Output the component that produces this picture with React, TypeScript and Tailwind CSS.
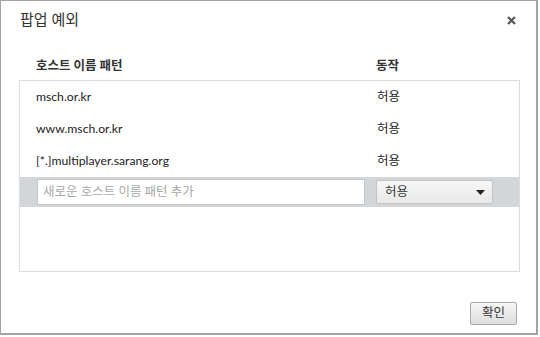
import React from "react";

const font = { fontFamily: 'Lato, "Noto Sans CJK KR", sans-serif' };

export default function App() {
  const rows = ["msch.or.kr", "www.msch.or.kr", "[*.]multiplayer.sarang.org"];
  return (
    <div className="w-[540px] h-[337px] bg-white" style={font}>
      <div className="w-[538px] h-[335px] border border-[#a3a3a3] border-r-2 border-b-2 bg-white flex flex-col text-[#333]">
        <div className="flex items-start justify-between h-[44px] pl-[19px] pr-[20px] pt-[6px]">
          <div className="text-[15px] leading-[24px] text-[#333]">팝업 예외</div>
          <svg width="9" height="9" viewBox="0 0 9 9" className="mt-[9px]">
            <path d="M1 1L8 8M8 1L1 8" stroke="#555" strokeWidth="2.2" />
          </svg>
        </div>
        <div className="flex h-[35px] items-end pb-[4px] text-[12.5px] font-bold text-[#333]">
          <div className="pl-[35px] w-[375px]">호스트 이름 패턴</div>
          <div>동작</div>
        </div>
        <div className="mx-[18px] w-[501px] h-[192px] border border-[#dcdcdc] flex flex-col">
          {rows.map((r) => (
            <div key={r} className="flex h-[32px] items-center text-[12px] text-[#222]">
              <div className="pl-[16px] w-[357px] text-[12.2px]">{r}</div>
              <div className="text-[12.5px]">허용</div>
            </div>
          ))}
          <div className="h-[30px] bg-[#d3d6d9] flex items-center">
            <div className="ml-[17px] w-[328px] h-[26px] bg-white border border-[#c6c6c6] flex items-center pl-[5px] text-[12.5px] text-[#a8a8a8]">
              새로운 호스트 이름 패턴 추가
            </div>
            <div className="ml-[11px] w-[117px] h-[24px] border border-[#c2c2c2] rounded-[2px] bg-gradient-to-b from-[#f7f7f7] to-[#e9e9e9] flex items-center justify-between pl-[8px] pr-[7px] text-[12.5px] text-[#333]">
              <span>허용</span>
              <svg width="9" height="5" viewBox="0 0 9 5"><path d="M0 0h9L4.5 5z" fill="#222" /></svg>
            </div>
          </div>
        </div>
        <div className="flex-1 flex items-end justify-end pr-[19px] pb-[8px]">
          <div className="w-[47px] h-[23px] border border-[#a9a9a9] rounded-[2px] bg-gradient-to-b from-[#f6f6f6] to-[#dedede] flex items-center justify-center text-[12.5px] text-[#333]">
            확인
          </div>
        </div>
      </div>
    </div>
  );
}
